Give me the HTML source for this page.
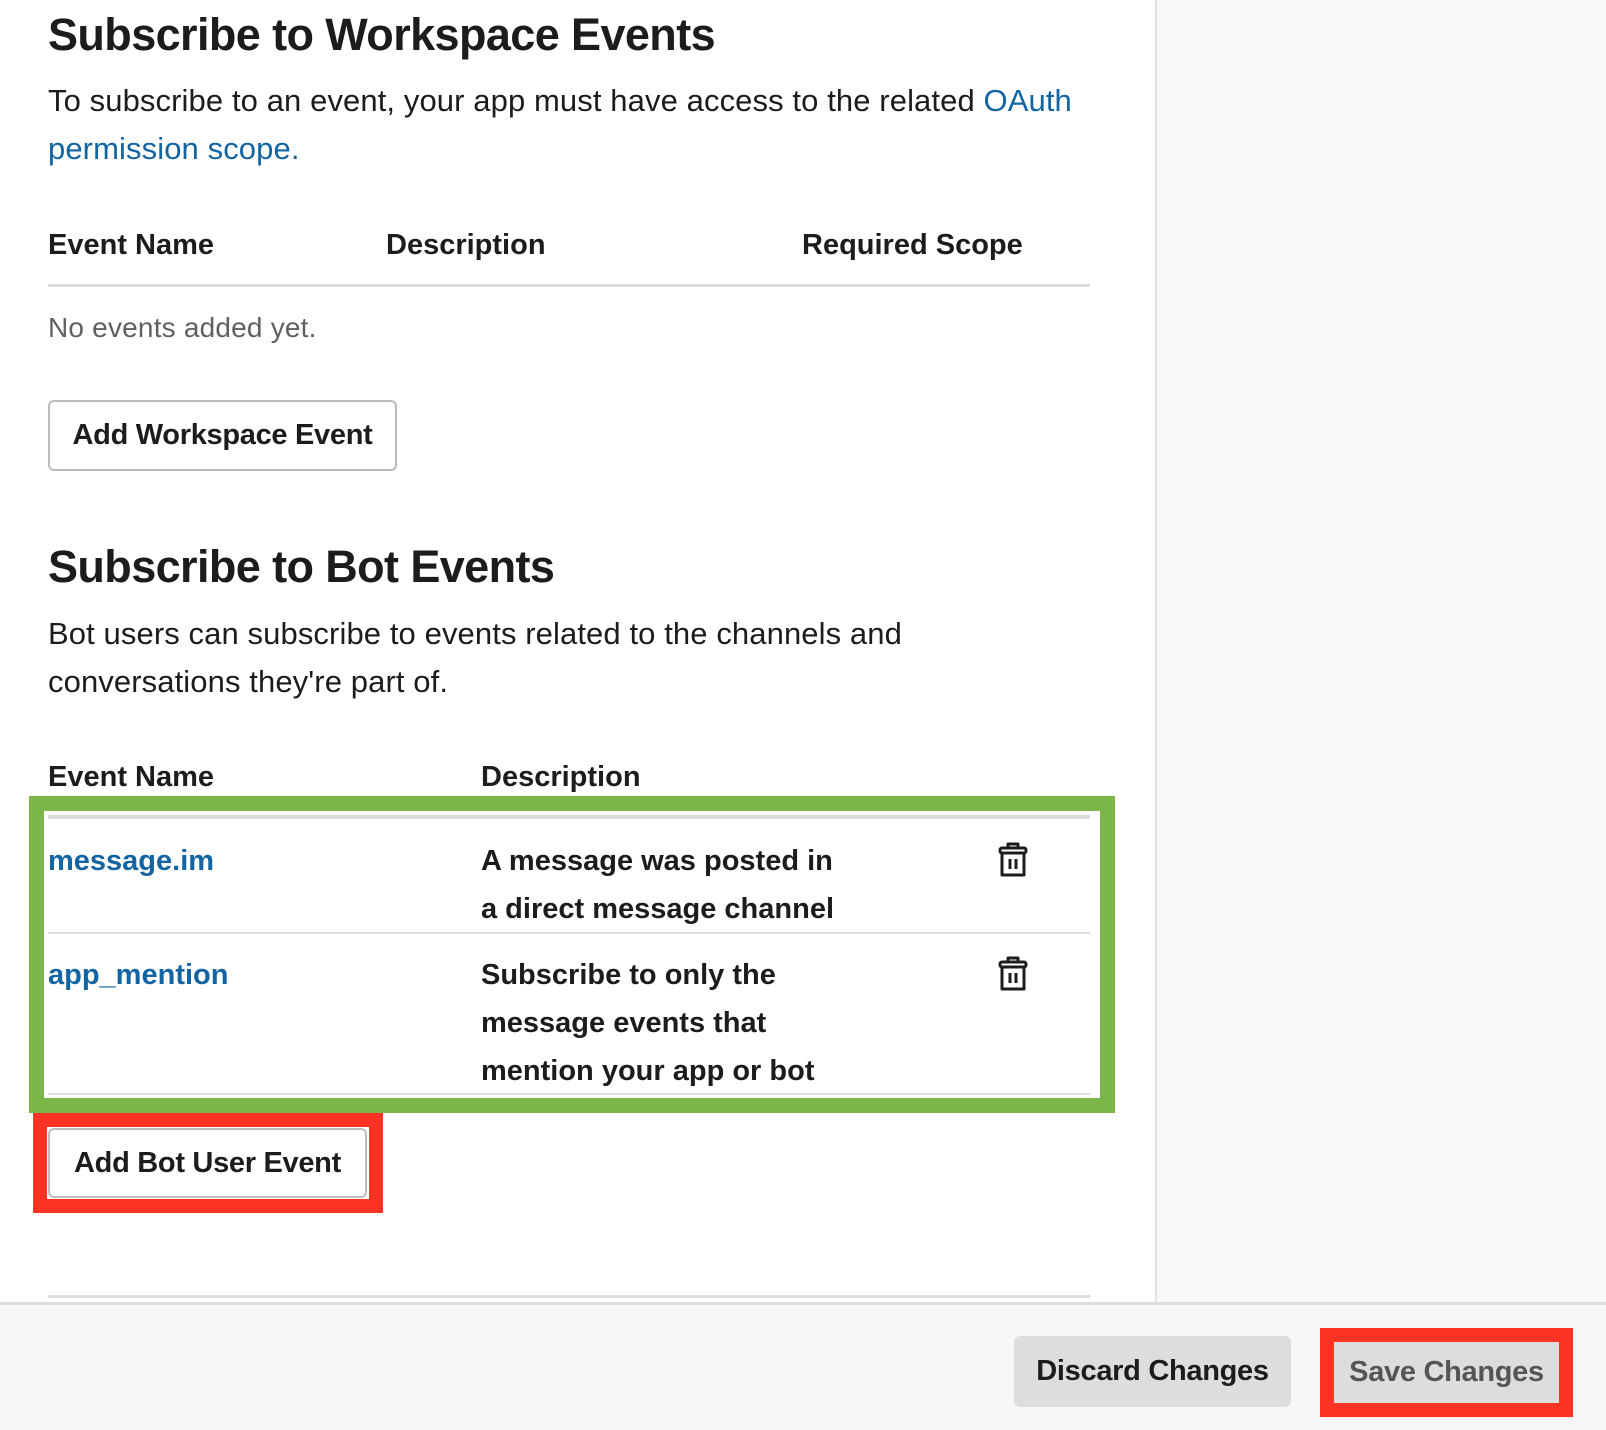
<!DOCTYPE html>
<html><head><meta charset="utf-8"><style>
*{margin:0;padding:0;box-sizing:border-box}
body{width:1606px;height:1430px;overflow:hidden;background:#fff;font-family:"Liberation Sans",sans-serif;color:#1d1c1d;position:relative}
.side{position:absolute;left:1155px;top:0;width:451px;height:1302px;background:#f8f8f8;border-left:2px solid #e2e2e2}
.a{position:absolute;white-space:nowrap}
h1,h2{font-weight:bold;font-size:45px;letter-spacing:-0.6px}
.p{font-size:31px;letter-spacing:0.1px}
.th{font-weight:bold;font-size:29px;letter-spacing:0px}
.link{color:#1264a3}
.btn{position:absolute;border:2px solid #bbb;border-radius:6px;background:#fff;font-weight:bold;font-size:29px;letter-spacing:-0.3px;display:flex;align-items:center;justify-content:center}
.line{position:absolute;left:48px;width:1042px;background:#ddd}
.footer{position:absolute;left:0;top:1302px;width:1606px;height:128px;background:#f7f7f7;border-top:3px solid #ddd}
</style></head><body>
<div class="side"></div>
<h1 class="a" style="left:48px;top:9px">Subscribe to Workspace Events</h1>
<div class="a p" style="left:48px;top:83px">To subscribe to an event, your app must have access to the related <span class="link">OAuth</span></div>
<div class="a p link" style="left:48px;top:131px">permission scope.</div>
<div class="a th" style="left:48px;top:229px">Event Name</div>
<div class="a th" style="left:386px;top:229px">Description</div>
<div class="a th" style="left:802px;top:229px">Required Scope</div>
<div class="line" style="top:284px;height:3px"></div>
<div class="a p" style="left:48px;top:312px;color:#616061;font-size:28px;letter-spacing:0.2px">No events added yet.</div>
<div class="btn" style="left:48px;top:400px;width:349px;height:71px">Add Workspace Event</div>
<h2 class="a" style="left:48px;top:541px">Subscribe to Bot Events</h2>
<div class="a p" style="left:48px;top:616px">Bot users can subscribe to events related to the channels and</div>
<div class="a p" style="left:48px;top:664px">conversations they're part of.</div>
<div class="a th" style="left:48px;top:761px">Event Name</div>
<div class="a th" style="left:481px;top:761px">Description</div>
<div style="position:absolute;left:29px;top:796px;width:1086px;height:317px;border:15px solid #7ab648"></div>
<div class="line" style="top:815px;height:4px"></div>
<div class="a th link" style="left:48px;top:845px">message.im</div>
<div class="a th" style="left:481px;top:837px;line-height:48px">A message was posted in<br>a direct message channel</div>
<div class="line" style="top:932px;height:2px"></div>
<div class="a th link" style="left:48px;top:959px">app_mention</div>
<div class="a th" style="left:481px;top:951px;line-height:48px">Subscribe to only the<br>message events that<br>mention your app or bot</div>
<div class="line" style="top:1093px;height:2px"></div>
<svg class="a" style="left:998px;top:841px" width="30" height="38" viewBox="0 0 30 38" fill="none" stroke="#1d1c1d" stroke-width="3" stroke-linejoin="round"><path d="M10 7V3h10v4"/><rect x="2" y="7" width="26" height="5" rx="2"/><path d="M4 12v22h22V12"/><path d="M12 18v10M18 18v10"/></svg>
<svg class="a" style="left:998px;top:955px" width="30" height="38" viewBox="0 0 30 38" fill="none" stroke="#1d1c1d" stroke-width="3" stroke-linejoin="round"><path d="M10 7V3h10v4"/><rect x="2" y="7" width="26" height="5" rx="2"/><path d="M4 12v22h22V12"/><path d="M12 18v10M18 18v10"/></svg>
<div style="position:absolute;left:33px;top:1113px;width:350px;height:100px;border:14px solid #fe3323"></div>
<div class="btn" style="left:48px;top:1128px;width:319px;height:70px">Add Bot User Event</div>
<div class="line" style="top:1295px;height:3px"></div>
<div class="footer"></div>
<div class="btn" style="left:1014px;top:1336px;width:277px;height:71px;background:#ddd;border:none">Discard Changes</div>
<div style="position:absolute;left:1320px;top:1328px;width:253px;height:89px;border:14px solid #fe3323"></div>
<div class="btn" style="left:1334px;top:1342px;width:225px;height:61px;background:#ddd;border:none;color:#555;border-radius:0">Save Changes</div>
</body></html>
